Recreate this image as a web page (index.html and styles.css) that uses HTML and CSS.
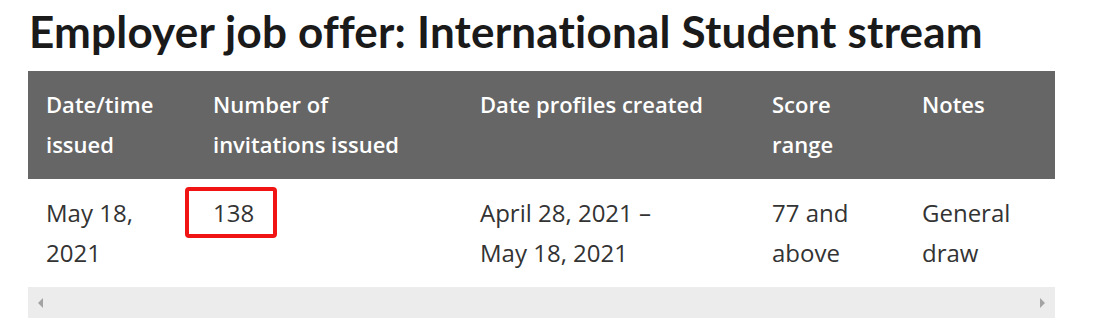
FILE: index.html
```html
<!DOCTYPE html>
<html>
<head>
<meta charset="utf-8">
<link rel="stylesheet" href="styles.css">
</head>
<body>
<div class="page">
  <h1 class="title">Employer job offer: International Student stream</h1>
  <div class="table-wrap">
    <table class="draws">
      <colgroup>
        <col class="c1"><col class="c2"><col class="c3"><col class="c4"><col class="c5">
      </colgroup>
      <thead>
        <tr>
          <th>Date/time issued</th>
          <th class="wide">Number of invitations issued</th>
          <th>Date profiles created</th>
          <th>Score range</th>
          <th>Notes</th>
        </tr>
      </thead>
      <tbody>
        <tr>
          <td>May 18, 2021</td>
          <td><span class="count">138<span class="highlight"></span></span></td>
          <td>April 28, 2021 –<br>May 18, 2021</td>
          <td>77 and above</td>
          <td>General draw</td>
        </tr>
      </tbody>
    </table>
    <div class="scrollbar">
      <span class="arrow left"></span>
      <span class="arrow right"></span>
    </div>
  </div>
</div>
</body>
</html>
```

FILE: styles.css
```css
* { box-sizing: border-box; }
html, body { margin: 0; padding: 0; background: #fff; }
.page { padding: 0 0 0 28px; width: 1055px; }
.title {
  font-family: "Lato", "Open Sans", sans-serif;
  font-weight: 700;
  font-size: 44px;
  line-height: 48px;
  color: #1a1a1a;
  margin: 7px 0 16px 1px;
  letter-spacing: 0.2px;
  font-variant-ligatures: none;
  white-space: nowrap;
}
.table-wrap { width: 1027px; }
.draws {
  width: 1027px;
  border-collapse: collapse;
  table-layout: fixed;
  font-family: "Open Sans", sans-serif;
}
.c1 { width: 167px; }
.c2 { width: 267px; }
.c3 { width: 292px; }
.c4 { width: 150px; }
.c5 { width: 151px; }
.draws th {
  background: #666666;
  color: #fff;
  font-weight: 600;
  font-size: 22px;
  line-height: 40px;
  text-align: left;
  vertical-align: top;
  padding: 13px 20px 15px 18px;
}
.draws th.wide { padding-right: 50px; }
.draws td {
  color: #333;
  font-size: 24px;
  line-height: 40px;
  vertical-align: top;
  padding: 14px 20px 14px 18px;
}
.count { position: relative; display: inline-block; }
.highlight {
  position: absolute;
  left: -28px;
  top: -6px;
  width: 92px;
  height: 51px;
  border: 4px solid #f01414;
  border-radius: 4px;
}
.scrollbar {
  height: 31px;
  background: #ececec;
  display: flex;
  align-items: center;
  justify-content: space-between;
  padding: 0 10px;
}
.arrow { width: 0; height: 0; border-top: 5px solid transparent; border-bottom: 5px solid transparent; }
.arrow.left { border-right: 5px solid #a3a3a3; }
.arrow.right { border-left: 5px solid #a3a3a3; }
```
